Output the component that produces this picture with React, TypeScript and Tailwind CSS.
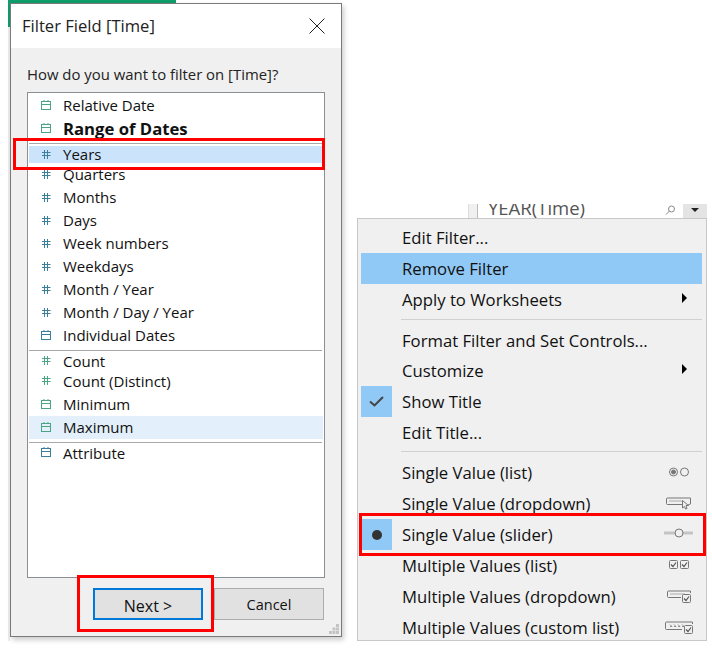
import type { ReactNode } from "react";

const font = { fontFamily: '"Open Sans", "Noto Sans", sans-serif' };

function CalIcon({ color }: { color: string }) {
	return (
		<svg width="11" height="11" viewBox="0 0 11 11" fill="none" stroke={color} strokeWidth="1">
			<rect x="0.5" y="1.5" width="9" height="8" />
			<path d="M0.5 4.5H9.5M3 0V2M7 0V2" />
		</svg>
	);
}

function HashIcon({ color }: { color: string }) {
	return (
		<svg width="11" height="11" viewBox="0 0 11 11" fill="none" stroke={color} strokeWidth="1">
			<path d="M3.5 1V10M6.5 1V10M1 3.5H9.5M1 6.5H9.5" />
		</svg>
	);
}

const green = "#4ba583";
const blue = "#3c7f9c";

function Row({
	label,
	h,
	kind,
	color,
	bg,
	bold,
}: {
	label: string;
	h: string;
	kind: "cal" | "hash";
	color: string;
	bg?: string;
	bold?: boolean;
}) {
	return (
		<div className={`flex items-center mx-[1px] ${h} ${bg ?? ""}`}>
			<div className="w-[12px] ml-[12px] flex items-center mb-[1px]">
				{kind === "cal" ? <CalIcon color={color} /> : <HashIcon color={color} />}
			</div>
			<span className={`ml-[10px] text-[#111] ${bold ? "font-bold text-[16.7px]" : "text-[15px]"}`}>{label}</span>
		</div>
	);
}

function Sep({ className }: { className: string }) {
	return <div className={`h-[1px] mx-[1px] mr-[2px] bg-[#a8a8a8] ${className}`} />;
}

function MenuRow({ label, left, right, h = "h-[31px]", bg }: { label: string; left?: ReactNode; right?: ReactNode; h?: string; bg?: string }) {
	return (
		<div className={`flex items-center ${h} ${bg ?? ""}`}>
			<div className="w-[31px] h-full shrink-0 flex items-center justify-center">{left}</div>
			<span className="ml-[10px] text-[16.7px] text-[#111] whitespace-nowrap">{label}</span>
			<div className="ml-auto flex items-center justify-center w-[46px] h-full">{right}</div>
		</div>
	);
}

function Arrow() {
	return <div className="w-0 h-0 ml-[10px] mb-[4px] border-y-[5px] border-y-transparent border-l-[5px] border-l-black" />;
}

const g = "#777";

const SingleList = () => (
	<svg className="mb-[2px]" width="22" height="12" viewBox="0 0 22 12" fill="none" stroke={g}>
		<circle cx="5.5" cy="6" r="4" />
		<circle cx="5.5" cy="6" r="2" fill={g} />
		<circle cx="16.5" cy="6" r="4" />
	</svg>
);

const SingleDrop = () => (
	<svg width="26" height="13" viewBox="0 0 26 13" fill="none" stroke={g}>
		<path d="M16 7.5H1.5a1 1 0 0 1-1-1V2a1 1 0 0 1 1-1H24.5V7L22 8" />
		<path d="M3 4H16" stroke="#aaa" />
		<path d="M16.5 3.5L22.5 8.5H20L21 11.5L19.5 12L18.5 9.5L16.5 11Z" fill="#f0f0f0" />
	</svg>
);

const Slider = () => (
	<svg className="mb-[3px]" width="30" height="12" viewBox="0 0 30 12" fill="none">
		<rect x="0" y="4.5" width="29" height="3" fill="#c4c4c4" />
		<circle cx="15" cy="6" r="4" fill="#f0f0f0" stroke={g} />
	</svg>
);

const Check = ({ x }: { x: number }) => (
	<g>
		<rect x={x + 0.5} y="0.5" width="8" height="8" rx="1" fill="#f0f0f0" stroke={g} />
		<path d={`M${x + 2} 4.5L${x + 4} 6.5L${x + 7} 2.5`} stroke="#555" strokeWidth="1.2" fill="none" />
	</g>
);

const MultiList = () => (
	<svg className="mb-[2px]" width="20" height="9" viewBox="0 0 20 9">
		<Check x={0} />
		<Check x={11} />
	</svg>
);

const MultiDrop = () => (
	<svg width="25" height="14" viewBox="0 0 25 14" fill="none" stroke={g}>
		<path d="M14 7.5H1.5a1 1 0 0 1-1-1V2a1 1 0 0 1 1-1H23.5V3" />
		<path d="M3 4H18" stroke="#aaa" />
		<g transform="translate(15 4)">
			<Check x={0} />
		</g>
	</svg>
);

const MultiCustom = () => (
	<svg width="29" height="14" viewBox="0 0 29 14" fill="none" stroke={g}>
		<path d="M17 8.5H1.5a1 1 0 0 1-1-1V2a1 1 0 0 1 1-1H27.5V3" />
		<path d="M5 3.5l2 2-2 0M9 3.5l2 2-2 0M13 3.5l2 2-2 0M17 3.5l2 2-2 0" strokeWidth="0.8" />
		<g transform="translate(19 4)">
			<Check x={0} />
		</g>
	</svg>
);

export default function App() {
	return (
		<div className="relative w-[712px] h-[649px] bg-white flex items-start overflow-hidden" style={font}>
			{/* backdrop behind the dialog */}
			<div className="absolute left-[8px] top-0 w-[168px] h-[3px] bg-[#0f9d6b]" />
			<div className="absolute left-[8px] top-0 w-[2px] h-[641px] bg-[#ececec]" />
			<div className="absolute left-[8px] top-0 w-[2px] h-[27px] bg-[#0f9d6b]" />

			{/* DIALOG */}
			<div className="relative ml-[10px] mt-[3px] w-[332px] h-[634px] border border-[#7a7a7a] bg-[#f0f0f0] flex flex-col shadow-[2px_3px_5px_rgba(0,0,0,0.2)] shrink-0">
				<div className="h-[44px] bg-white flex items-center justify-between pl-[11px] pr-[16px]">
					<span className="text-[16.6px] text-[#222]">Filter Field [Time]</span>
					<svg width="16" height="16" viewBox="0 0 16 16" stroke="#222" strokeWidth="1">
						<path d="M0.5 0.5L15.5 15.5M15.5 0.5L0.5 15.5" />
					</svg>
				</div>
				<div className="mt-[14px] ml-[16px] text-[14.9px] leading-[24px] text-[#222]">How do you want to filter on [Time]?</div>
				<div className="mt-[6px] ml-[16px] w-[298px] h-[486px] border border-[#8a8f94] bg-white pt-[1px]">
					<Row label="Relative Date" h="h-[23px]" kind="cal" color={green} />
					<Row label="Range of Dates" h="h-[23px]" kind="cal" color={green} bold />
					<Sep className="mt-[3px]" />
					<Row label="Years" h="h-[17px] mt-[2px]" kind="hash" color={blue} bg="bg-[#cce4fb]" />
					<Row label="Quarters" h="h-[23px]" kind="hash" color={blue} />
					<Row label="Months" h="h-[23px]" kind="hash" color={blue} />
					<Row label="Days" h="h-[23px]" kind="hash" color={blue} />
					<Row label="Week numbers" h="h-[23px]" kind="hash" color={blue} />
					<Row label="Weekdays" h="h-[23px]" kind="hash" color={blue} />
					<Row label="Month / Year" h="h-[23px]" kind="hash" color={blue} />
					<Row label="Month / Day / Year" h="h-[23px]" kind="hash" color={blue} />
					<Row label="Individual Dates" h="h-[23px]" kind="cal" color={blue} />
					<Sep className="mt-[3px]" />
					<Row label="Count" h="h-[20px]" kind="hash" color={green} />
					<Row label="Count (Distinct)" h="h-[20px]" kind="hash" color={green} />
					<Row label="Minimum" h="h-[23px] mt-[2px]" kind="cal" color={green} />
					<Row label="Maximum" h="h-[23px]" kind="cal" color={green} bg="bg-[#e3f0fb]" />
					<Sep className="mt-[3px]" />
					<Row label="Attribute" h="h-[20px]" kind="cal" color={blue} />
				</div>
				<div className="mt-[10px] ml-[82px] flex gap-[11px]">
					<div className="w-[110px] h-[32px] border-2 border-[#0078d7] bg-[#e1e1e1] flex items-center justify-center pt-[3px] text-[16px] text-[#111]">Next &gt;</div>
					<div className="w-[110px] h-[32px] border border-[#adadad] bg-[#e1e1e1] flex items-center justify-center pt-[2px] text-[14.5px] text-[#111]">Cancel</div>
				</div>
				{/* size grip */}
				<svg className="absolute right-[1px] bottom-[1px]" width="11" height="11" viewBox="0 0 11 11" fill="#c4c4c4">
					<rect x="7" y="0" width="3" height="3" />
					<rect x="3.5" y="3.5" width="3" height="3" />
					<rect x="7" y="3.5" width="3" height="3" />
					<rect x="0" y="7" width="3" height="3" />
					<rect x="3.5" y="7" width="3" height="3" />
					<rect x="7" y="7" width="3" height="3" />
				</svg>
			</div>

			{/* red boxes over the dialog */}
			<div className="absolute left-[13px] top-[138px] w-[312px] h-[32px] border-[3px] border-[#ff0000]" />
			<div className="absolute left-[77px] top-[575px] w-[137px] h-[57px] border-[3px] border-[#ff0000]" />

			{/* MENU */}
			<div className="ml-[15px] mt-[204px] w-[350px] shrink-0">
				<div className="flex h-[14px] ml-[111px] overflow-hidden border-l border-[#ddd] bg-[#f0f0f0] pl-[8px]">
					<div className="flex-1 bg-white border-l border-[#bbb] flex items-start overflow-hidden pl-[10px]">
						<span className="text-[18.5px] leading-[18px] mt-[-5px] text-[#555] whitespace-nowrap">YEAR(Time)</span>
						<svg className="ml-auto mr-[7px] mt-[1px]" width="11" height="11" viewBox="0 0 11 11" fill="none" stroke="#888">
							<circle cx="6.5" cy="4" r="3" />
							<path d="M4.5 6L1 9.5" />
						</svg>
					</div>
					<div className="w-[24px] bg-[#e4e4e4] flex justify-center pt-[4px]">
						<div className="w-0 h-0 border-x-[4px] border-x-transparent border-t-[4px] border-t-[#222]" />
					</div>
				</div>
				<div className="w-[350px] h-[423px] border border-[#c8c8c8] bg-[#f0f0f0] pl-[3px] pr-[4px] pt-[3px] overflow-hidden">
					<MenuRow label="Edit Filter..." />
					<MenuRow label="Remove Filter" bg="bg-[#90c8f6]" />
					<MenuRow label="Apply to Worksheets" right={<Arrow />} />
					<div className="h-[1px] ml-[40px] my-[4px] bg-[#d0d0d0]" />
					<MenuRow label="Format Filter and Set Controls..." h="h-[29px] mt-[6px]" />
					<MenuRow label="Customize" right={<Arrow />} />
					<MenuRow
						label="Show Title"
						left={
							<div className="w-full h-full bg-[#90c8f6] flex items-center justify-center">
								<svg width="15" height="11" viewBox="0 0 15 11" fill="none" stroke="#444" strokeWidth="2">
									<path d="M1 5.5L5.5 9.5L14 1" />
								</svg>
							</div>
						}
					/>
					<MenuRow label="Edit Title..." />
					<div className="h-[1px] ml-[40px] my-[3px] bg-[#d0d0d0]" />
					<MenuRow label="Single Value (list)" h="h-[31px] mt-[5px]" right={<SingleList />} />
					<MenuRow label="Single Value (dropdown)" right={<SingleDrop />} />
					<MenuRow
						label="Single Value (slider)"
						left={
							<div className="w-full h-full bg-[#90c8f6] flex items-center justify-center">
								<div className="w-[10px] h-[10px] rounded-full bg-[#333]" />
							</div>
						}
						right={<Slider />}
					/>
					<MenuRow label="Multiple Values (list)" right={<MultiList />} />
					<MenuRow label="Multiple Values (dropdown)" right={<MultiDrop />} />
					<MenuRow label="Multiple Values (custom list)" right={<MultiCustom />} />
				</div>
			</div>

			<div className="absolute left-[359px] top-[513px] w-[347px] h-[43px] border-[3px] border-[#ff0000]" />
		</div>
	);
}
